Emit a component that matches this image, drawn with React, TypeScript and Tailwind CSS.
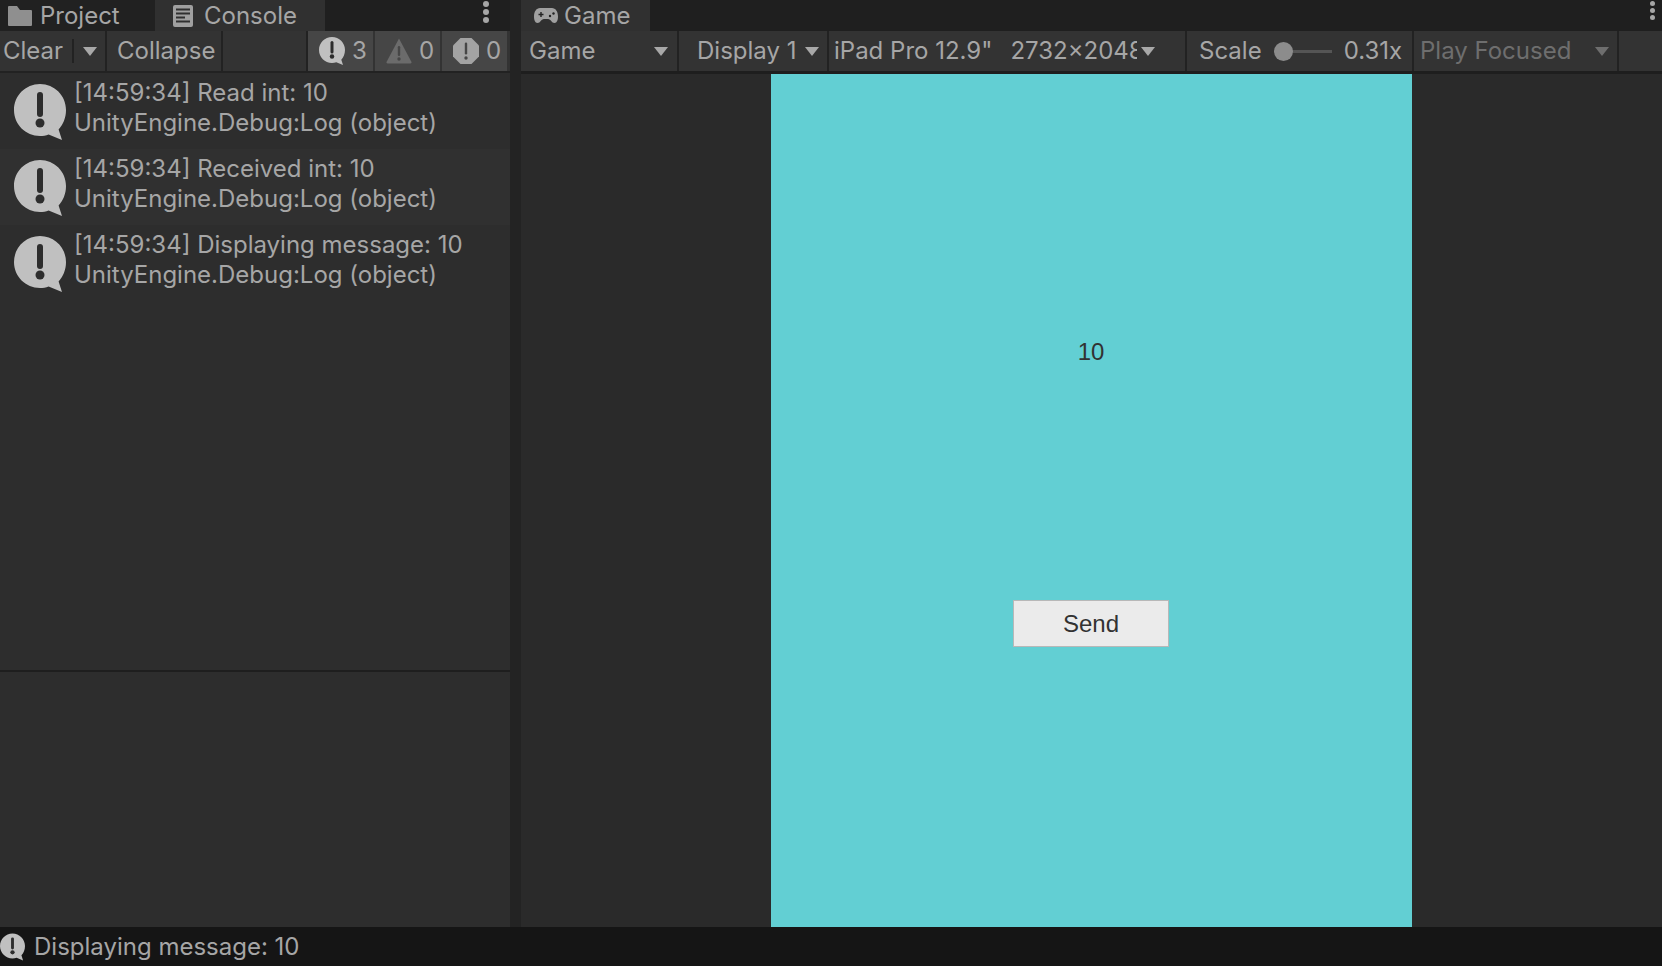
import React from 'react';

const InfoIcon: React.FC<{ className?: string }> = ({ className }) => (
  <svg className={className} viewBox="0 0 52 56" fill="none">
    <path
      d="M26 0C11.6 0 0 11.6 0 26s11.6 26 26 26c3 0 6-.5 8.6-1.5L48 56l-3.4-10.6C49 40.800 52 33.800 52 26 52 11.6 40.400 0 26 0z"
      fill="#c0c0c0"
    />
    <rect x="23" y="8" width="6" height="25" rx="3" fill="#2d2d2d" />
    <circle cx="26" cy="39" r="4.500" fill="#2d2d2d" />
  </svg>
);

const WarnIcon: React.FC<{ className?: string }> = ({ className }) => (
  <svg className={className} viewBox="0 0 26 26" fill="none">
    <path d="M13 0.500 25.500 24a1.200 1.200 0 0 1-1 1.500H1.500a1.200 1.200 0 0 1-1-1.500z" fill="#6b6b6b" />
    <rect x="11.800" y="8" width="2.400" height="10" rx="1.200" fill="#464646" />
    <circle cx="13" cy="21" r="1.700" fill="#464646" />
  </svg>
);

const ErrorIcon: React.FC<{ className?: string }> = ({ className }) => (
  <svg className={className} viewBox="0 0 26 26" fill="none">
    <path d="M7.500 0h11L26 7.500v11L18.500 26h-11L0 18.500v-11z" fill="#a3a3a3" />
    <rect x="11.800" y="4.500" width="2.400" height="12" rx="1.200" fill="#464646" />
    <circle cx="13" cy="20" r="1.700" fill="#464646" />
  </svg>
);

const FolderIcon: React.FC<{ className?: string }> = ({ className }) => (
  <svg className={className} viewBox="0 0 24 20" fill="#8f8f8f">
    <path d="M1 0h8l3 4h11a1 1 0 0 1 1 1v14a1 1 0 0 1-1 1H1a1 1 0 0 1-1-1V1a1 1 0 0 1 1-1z" />
  </svg>
);

const ConsoleIcon: React.FC<{ className?: string }> = ({ className }) => (
  <svg className={className} viewBox="0 0 20 22" fill="none">
    <rect width="20" height="22" rx="2" fill="#a0a0a0" />
    <path d="M3 4.500h14M3 8.500h14M3 12.500h9M3 16.500h14" stroke="#303030" strokeWidth="2" />
  </svg>
);

const GamepadIcon: React.FC<{ className?: string }> = ({ className }) => (
  <svg className={className} viewBox="0 0 24 15" fill="none">
    <path d="M6 0h12c3.500 0 6 3.500 6 8.500 0 3.500-1 6.500-3.500 6.500-3 0-3.500-4-6.500-4H10c-3 0-3.500 4-6.500 4C1 15 0 12 0 8.500 0 3.500 2.500 0 6 0z" fill="#a0a0a0" />
    <path d="M4.500 6.500h5M7 4v5" stroke="#222" strokeWidth="1.400" />
    <circle cx="16" cy="8" r="1.200" fill="#222" />
    <circle cx="19.500" cy="5.500" r="1.200" fill="#222" />
  </svg>
);

const Caret: React.FC<{ disabled?: boolean }> = ({ disabled }) => (
  <span
    className={`w-0 h-0 border-l-[7px] border-r-[7px] border-t-[9px] border-l-transparent border-r-transparent ${
      disabled ? 'border-t-[#6e6e6e]' : 'border-t-[#a8a8a8]'
    }`}
  />
);

const Sep: React.FC<{ w?: string }> = ({ w = 'w-[2px]' }) => <div className={`${w} shrink-0 bg-[#222222]`} />;

const logs = ['Read int: 10', 'Received int: 10', 'Displaying message: 10'];

const LogRow: React.FC<{ text: string; alt?: boolean }> = ({ text, alt }) => (
  <div className={`h-[76px] flex pl-[14px] ${alt ? 'bg-[#303030]' : 'bg-[#2d2d2d]'}`}>
    <InfoIcon className="w-[52px] h-[56px] mt-[11px] shrink-0" />
    <div className="ml-[8px] pt-[5px] text-[24px] leading-[29.5px] whitespace-nowrap">
      <div>[14:59:34] {text}</div>
      <div>UnityEngine.Debug:Log (object)</div>
    </div>
  </div>
);

const Badge: React.FC<{ icon: React.ReactNode; count: number }> = ({ icon, count }) => (
  <div className="w-[65px] bg-[#464646] flex items-center pl-[11px] gap-[7px]">
    {icon}
    <span>{count}</span>
  </div>
);

export default function App() {
  return (
    <div
      className="w-[1662px] h-[966px] overflow-hidden flex flex-col bg-[#1f1f1f] text-[#a6a6a6] text-[24px] leading-none"
      style={{ fontFamily: 'Inter, "Liberation Sans", sans-serif' }}
    >
      <div className="flex flex-1 min-h-0">
        {/* console side */}
        <div className="w-[510px] shrink-0 flex flex-col">
          <div className="h-[31px] flex bg-[#1f1f1f] shrink-0">
            <div className="w-[155px] flex items-center pl-[8px] gap-[8px] bg-[#212121]">
              <FolderIcon className="w-[24px] h-[20px]" />
              <span>Project</span>
            </div>
            <div className="w-[170px] flex items-center pl-[18px] gap-[11px] bg-[#303030]">
              <ConsoleIcon className="w-[20px] h-[22px]" />
              <span>Console</span>
            </div>
            <div className="flex-1 flex justify-end items-start pr-[21px] pt-[1px]">
              <div className="flex flex-col gap-[2px]">
                <span className="w-[6px] h-[6px] rounded-full bg-[#a6a6a6]" />
                <span className="w-[6px] h-[6px] rounded-full bg-[#a6a6a6]" />
                <span className="w-[6px] h-[6px] rounded-full bg-[#a6a6a6]" />
              </div>
            </div>
          </div>
          <div className="h-[42px] shrink-0 flex bg-[#333333] border-b-2 border-[#222222]">
            <div className="w-[105px] flex items-center pl-[3px]">
              <span>Clear</span>
              <div className="w-[2px] h-[24px] bg-[#222222] ml-[9px]" />
              <span className="ml-[9px] flex"><Caret /></span>
            </div>
            <Sep />
            <div className="w-[114px] flex items-center pl-[10px]">Collapse</div>
            <Sep />
            <div className="flex-1" />
            <Sep />
            <div className="flex gap-[2px] pr-[3px]">
              <Badge icon={<InfoIcon className="w-[26px] h-[28px]" />} count={3} />
              <Badge icon={<WarnIcon className="w-[26px] h-[26px]" />} count={0} />
              <Badge icon={<ErrorIcon className="w-[26px] h-[26px]" />} count={0} />
            </div>
          </div>
          <div className="h-[597px] shrink-0 bg-[#2d2d2d]">
            {logs.map((t, i) => (
              <LogRow key={t} text={t} alt={i === 1} />
            ))}
          </div>
          <div className="h-[2px] shrink-0 bg-[#1e1e1e]" />
          <div className="flex-1 bg-[#2d2d2d]" />
        </div>

        <div className="w-[11px] shrink-0 bg-[#232323]" />

        {/* game side */}
        <div className="flex-1 min-w-0 flex flex-col">
          <div className="h-[31px] shrink-0 flex">
            <div className="w-[129px] bg-[#303030] flex items-center pl-[13px] gap-[6px]">
              <GamepadIcon className="w-[24px] h-[15px]" />
              <span>Game</span>
            </div>
            <div className="flex-1 flex justify-end items-start pr-[7px] pt-[1px]">
              <div className="flex flex-col gap-[2px]">
                <span className="w-[5px] h-[5px] rounded-full bg-[#a6a6a6]" />
                <span className="w-[5px] h-[5px] rounded-full bg-[#a6a6a6]" />
                <span className="w-[5px] h-[5px] rounded-full bg-[#a6a6a6]" />
              </div>
            </div>
          </div>
          <div className="h-[40px] shrink-0 flex bg-[#333333]">
            <div className="w-[156px] flex items-center justify-between pl-[8px] pr-[9px]">
              <span>Game</span>
              <Caret />
            </div>
            <Sep />
            <div className="w-[148px] flex items-center justify-between pl-[18px] pr-[8px]">
              <span>Display 1</span>
              <Caret />
            </div>
            <Sep />
            <div className="w-[356px] flex items-center pl-[5px] pr-[5px]">
              <span className="w-[303px] overflow-hidden whitespace-nowrap flex justify-between">
                <span>iPad Pro 12.9"</span>
                <span className="ml-[18px]">2732x2048</span>
              </span>
              <span className="ml-[4px] flex"><Caret /></span>
            </div>
            <Sep />
            <div className="w-[225px] flex items-center pl-[12px]">
              <span>Scale</span>
              <div className="relative w-[58px] h-[3px] ml-[12px] bg-[#555555] flex items-center">
                <span className="absolute left-0 w-[19px] h-[19px] rounded-full bg-[#8c8c8c]" />
              </div>
              <span className="ml-[12px]">0.31x</span>
            </div>
            <Sep />
            <div className="w-[203px] flex items-center justify-between pl-[6px] pr-[8px] text-[#6e6e6e]">
              <span>Play Focused</span>
              <Caret disabled />
            </div>
            <Sep />
            <div className="flex-1" />
          </div>
          <div className="h-[3px] shrink-0 bg-[#1e1e1e]" />
          <div className="flex-1 min-h-0 flex justify-center bg-[#2a2a2a] pr-[1px]">
            <div className="w-[641px] bg-[#62cfd3] flex flex-col items-center" style={{ fontFamily: '"Liberation Sans", Arial, sans-serif' }}>
              <div className="mt-[266px] text-[24px] text-[#323232]">10</div>
              <div className="mt-[236px] w-[156px] h-[47px] bg-[#ebebeb] border border-[#b8b8b8] flex items-center justify-center text-[24px] text-[#323232]">
                Send
              </div>
            </div>
          </div>
        </div>
      </div>

      {/* status bar */}
      <div className="h-[39px] shrink-0 bg-[#151515] flex items-center">
        <InfoIcon className="w-[25px] h-[28px] mt-[1px]" />
        <span className="ml-[9px]">Displaying message: 10</span>
      </div>
    </div>
  );
}
